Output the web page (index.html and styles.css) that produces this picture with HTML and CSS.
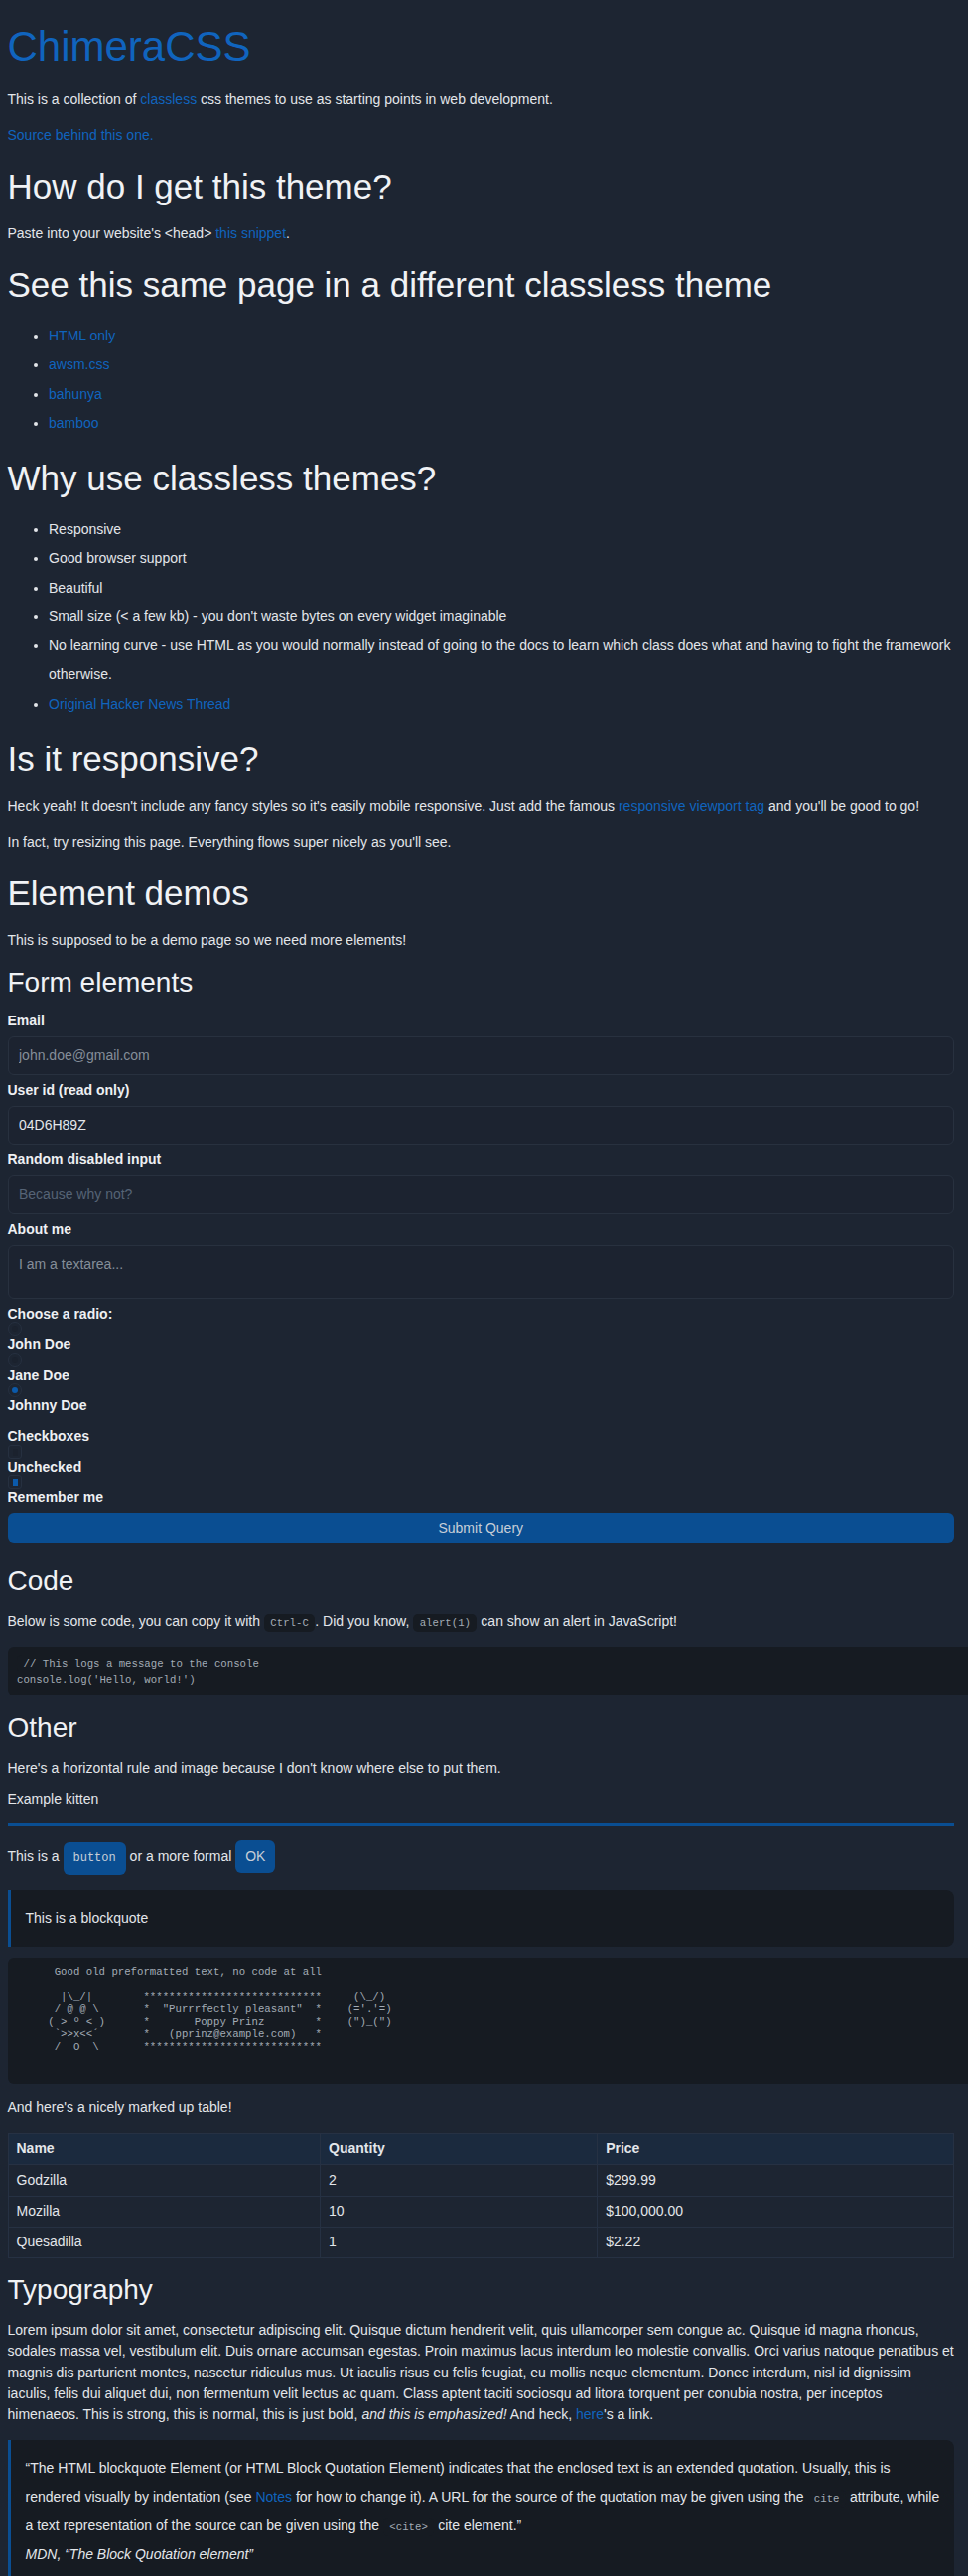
FILE: index.html
```html
<!DOCTYPE html>
<html lang="en">
<head>
<meta charset="utf-8">
<title>ChimeraCSS</title>
<link rel="stylesheet" href="styles.css">
</head>
<body>
<main class="page">
<h1 class="title">ChimeraCSS</h1>
<p>This is a collection of <a href="#">classless</a> css themes to use as starting points in web development.</p>
<p><a href="#">Source behind this one.</a></p>

<h2>How do I get this theme?</h2>
<p>Paste into your website's &lt;head&gt; <a href="#">this snippet</a>.</p>

<h2>See this same page in a different classless theme</h2>
<ul class="list">
<li><a href="#">HTML only</a></li>
<li><a href="#">awsm.css</a></li>
<li><a href="#">bahunya</a></li>
<li><a href="#">bamboo</a></li>
</ul>

<h2>Why use classless themes?</h2>
<ul class="list">
<li>Responsive</li>
<li>Good browser support</li>
<li>Beautiful</li>
<li>Small size (&lt; a few kb) - you don't waste bytes on every widget imaginable</li>
<li>No learning curve - use HTML as you would normally instead of going to the docs to learn which class does what and having to fight the framework otherwise.</li>
<li><a href="#">Original Hacker News Thread</a></li>
</ul>

<h2>Is it responsive?</h2>
<p>Heck yeah! It doesn't include any fancy styles so it's easily mobile responsive. Just add the famous <a href="#">responsive viewport tag</a> and you'll be good to go!</p>
<p>In fact, try resizing this page. Everything flows super nicely as you'll see.</p>

<h2>Element demos</h2>
<p>This is supposed to be a demo page so we need more elements!</p>

<h3>Form elements</h3>
<form class="form">
<label class="label" for="email">Email</label>
<input class="field" id="email" type="email" placeholder="john.doe@gmail.com">
<label class="label" for="uid">User id (read only)</label>
<input class="field" id="uid" type="text" value="04D6H89Z" readonly>
<label class="label" for="dis">Random disabled input</label>
<input class="field" id="dis" type="text" placeholder="Because why not?" disabled>
<label class="label" for="about">About me</label>
<textarea class="field area" id="about" placeholder="I am a textarea..."></textarea>
<label class="label">Choose a radio:</label>
<input class="radio" type="radio" id="john" name="r">
<label class="label" for="john">John Doe</label>
<input class="radio" type="radio" id="jane" name="r">
<label class="label" for="jane">Jane Doe</label>
<input class="radio" type="radio" id="johnny" name="r" checked>
<label class="label" for="johnny">Johnny Doe</label>
<label class="label group">Checkboxes</label>
<input class="check" type="checkbox" id="c1">
<label class="label" for="c1">Unchecked</label>
<input class="check" type="checkbox" id="c2" checked>
<label class="label" for="c2">Remember me</label>
<input class="submit" type="submit" value="Submit Query">
</form>

<h3>Code</h3>
<p>Below is some code, you can copy it with <code class="chip">Ctrl-C</code>. Did you know, <code class="chip">alert(1)</code> can show an alert in JavaScript!</p>
<pre class="codeblock"><code class="chip">// This logs a message to the console
console.log('Hello, world!')</code></pre>

<h3>Other</h3>
<p>Here's a horizontal rule and image because I don't know where else to put them.</p>
<p class="kitten">Example kitten</p>
<hr class="rule">
<p class="buttons">This is a <button class="btn mono" type="button">button</button> or a more formal <button class="btn" type="button">OK</button></p>
<blockquote class="quote">This is a blockquote</blockquote>
<pre class="ascii">
    Good old preformatted text, no code at all

     |\_/|        ****************************     (\_/)
    / @ @ \       *  "Purrrfectly pleasant"  *    (='.'=)
   ( &gt; º &lt; )      *       Poppy Prinz        *    (")_(")
    `&gt;&gt;x&lt;&lt;´       *   (pprinz@example.com)   *
    /  O  \       ****************************
</pre>
<p>And here's a nicely marked up table!</p>
<table class="table">
<thead>
<tr><th>Name</th><th>Quantity</th><th>Price</th></tr>
</thead>
<tbody>
<tr><td>Godzilla</td><td>2</td><td>$299.99</td></tr>
<tr><td>Mozilla</td><td>10</td><td>$100,000.00</td></tr>
<tr><td>Quesadilla</td><td>1</td><td>$2.22</td></tr>
</tbody>
</table>

<h3>Typography</h3>
<p>Lorem ipsum dolor sit amet, consectetur adipiscing elit. Quisque dictum hendrerit velit, quis ullamcorper sem congue ac. Quisque id magna rhoncus, sodales massa vel, vestibulum elit. Duis ornare accumsan egestas. Proin maximus lacus interdum leo molestie convallis. Orci varius natoque penatibus et magnis dis parturient montes, nascetur ridiculus mus. Ut iaculis risus eu felis feugiat, eu mollis neque elementum. Donec interdum, nisl id dignissim iaculis, felis dui aliquet dui, non fermentum velit lectus ac quam. Class aptent taciti sociosqu ad litora torquent per conubia nostra, per inceptos himenaeos. <strong class="plain">This is strong,</strong> this is normal, <b class="plain">this is just bold,</b> <em>and this is emphasized!</em> And heck, <a href="#">here</a>'s a link.</p>
<blockquote class="quote long">
<p class="quote-text">“The HTML blockquote Element (or HTML Block Quotation Element) indicates that the enclosed text is an extended quotation. Usually, this is rendered visually by indentation (see <a href="#">Notes</a> for how to change it). A URL for the source of the quotation may be given using the <code class="chip">cite</code> attribute, while a text representation of the source can be given using the <code class="chip">&lt;cite&gt;</code> cite element.”</p>
<footer class="quote-source"><cite>MDN, “The Block Quotation element”</cite></footer>
</blockquote>
</main>
</body>
</html>
```

FILE: styles.css
```css
* {
  box-sizing: border-box;
}

html {
  background: #1d2532;
  overflow: hidden;
}

body {
  margin: 0;
  background: #1d2532;
  color: #e3e6ea;
  font-family: "Liberation Sans", Arial, sans-serif;
  font-size: 14px;
  line-height: 21.33px;
}

.page {
  padding: 0 14px 0 7.5px;
}

a {
  color: #1064be;
  text-decoration: none;
}

h1, h2, h3 {
  font-weight: 400;
  line-height: 1.2;
  color: #f0f2f5;
}

.title {
  font-size: 42px;
  margin: 21.8px 0 17.9px;
  color: #1064be;
}

h2 {
  font-size: 35px;
  margin: 19.5px 0 16.2px;
}

h3 {
  font-size: 28px;
  margin: 14px 0 13.5px;
}

p {
  margin: 0 0 14.7px;
}

.list {
  margin: 0 0 19px;
  padding-left: 41.5px;
}

.list li {
  line-height: 29.3px;
}

/* Form */
.form {
  margin: 0 0 21.5px;
}

.label {
  display: block;
  font-weight: 700;
  line-height: 16px;
  color: #eef0f3;
}

.label.group {
  margin-top: 16px;
}

.field {
  display: block;
  width: 100%;
  height: 39px;
  margin: 8px 0 7px;
  padding: 0 10.5px;
  background: #1c2330;
  border: 1px solid #28313f;
  border-radius: 6px;
  color: #e3e6ea;
  font: inherit;
  outline: none;
}

.field::placeholder {
  color: #858e99;
}

.field:disabled::placeholder {
  color: #566476;
}

.area {
  height: 55px;
  padding: 10px 10.5px;
  line-height: 16px;
  resize: none;
}

.radio,
.check {
  appearance: none;
  -webkit-appearance: none;
  display: block;
  width: 14px;
  height: 14px;
  margin: 0.5px 0 0;
  padding: 3px;
  border: 1px solid #263040;
  background: #1b222e;
  background-clip: content-box;
}

.radio {
  border-radius: 50%;
}

.check {
  border-radius: 3px;
  padding: 2.5px 3.5px;
}

.radio:checked,
.check:checked {
  background: #0b5aab;
  background-clip: content-box;
}

.submit {
  display: block;
  width: 100%;
  height: 30px;
  margin: 8px 0 0;
  border: none;
  border-radius: 6px;
  background: #0a4e92;
  color: #c7ced8;
  font: inherit;
}

/* Code */
.chip {
  font-family: "Liberation Mono", "DejaVu Sans Mono", monospace;
  font-size: 10.7px;
  line-height: 1;
  background: #161b22;
  color: #a3abb5;
  padding: 3px 6.5px;
  border-radius: 5px;
}

.codeblock {
  width: calc(100% + 40px);
  margin: 0 0 15.5px;
  padding: 9px 9.5px 8px;
  background: #161b22;
  border-radius: 6px;
  font-family: "Liberation Mono", "DejaVu Sans Mono", monospace;
  font-size: 10.7px;
  line-height: 16px;
  color: #a3abb5;
}

.codeblock .chip {
  line-height: 16px;
  padding: 3px 0 3px 6.5px;
}

.kitten {
  margin-top: -4.7px;
  margin-bottom: 0;
}

.rule {
  height: 3px;
  margin: 13.2px 0 14.5px;
  border: none;
  background: #0a4e92;
}

.btn {
  display: inline-block;
  padding: 6px 10px;
  border: none;
  border-radius: 6px;
  background: #0a4e92;
  color: #c7ced8;
  font: inherit;
  line-height: 21.33px;
  vertical-align: baseline;
}

.btn.mono {
  font-family: "Liberation Mono", monospace;
  font-size: 12px;
}

.quote {
  margin: 0 0 11px;
  padding: 14px 8px 14px 15px;
  background: #161b22;
  border-left: 3px solid #0a4e92;
  border-radius: 0 8px 8px 0;
  line-height: 29px;
}

.quote.long {
  margin: 0;
  padding-bottom: 40px;
}

.quote-text {
  margin: 0;
}

.quote-source {
  font-style: italic;
}

.ascii {
  width: calc(100% + 40px);
  margin: 0 0 14px;
  padding: 9px 21.5px 30.5px;
  background: #161b22;
  border-radius: 6px;
  font-family: "Liberation Mono", "DejaVu Sans Mono", monospace;
  font-size: 10.7px;
  line-height: 12.5px;
  color: #a3abb5;
}

/* Table */
.table {
  width: 100%;
  border-collapse: collapse;
  margin: 0 0 14.5px;
}

.table th,
.table td {
  border: 1px solid #263143;
  padding: 4.5px 8px;
  text-align: left;
  line-height: 21.33px;
}

.table th {
  background: #1b2a3e;
  font-weight: 700;
}

.plain {
  font-weight: 400;
}
```
